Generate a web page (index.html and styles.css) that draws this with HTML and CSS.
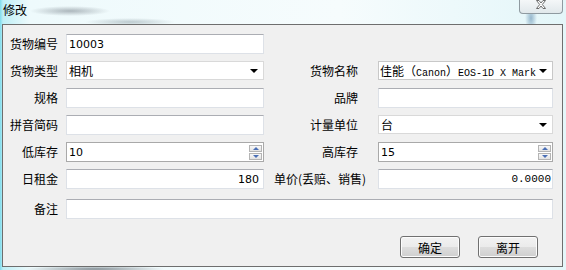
FILE: index.html
```html
<!DOCTYPE html>
<html>
	<head>
		<meta charset="utf-8">
		<title>修改</title>
		<link rel="stylesheet" href="styles.css">
	</head>
	<body>
		<div class="window">
			<div class="titlebar">
				<div class="title">修改</div>
				<div class="close">
					<svg width="12" height="10" viewBox="0 0 12 10">
						<path d="M1.5 0.5 L4 0.5 L6 3 L8 0.5 L10.5 0.5 L7.3 4.5 L10.5 8.5 L8 8.5 L6 6 L4 8.5 L1.5 8.5 L4.7 4.5 Z" fill="#fff" stroke="#6d6d6d" stroke-width="1"/>
					</svg>
				</div>
			</div>

			<div class="client">
				<div class="form">
					<div class="label">货物编号</div>
					<div class="field text">10003</div>
					<div></div>
					<div></div>

					<div class="label">货物类型</div>
					<div class="field combo"><span class="value">相机</span><span class="arrow"></span></div>
					<div class="label right">货物名称</div>
					<div class="field combo framed"><span class="value mono"><span class="cjk">佳能（</span>Canon<span class="cjk">）</span>EOS-1D X Mark</span><span class="arrow"></span></div>

					<div class="label">规格</div>
					<div class="field text"></div>
					<div class="label right">品牌</div>
					<div class="field text"></div>

					<div class="label">拼音简码</div>
					<div class="field text"></div>
					<div class="label right">计量单位</div>
					<div class="field combo"><span class="value">台</span><span class="arrow"></span></div>

					<div class="label">低库存</div>
					<div class="field spin"><span class="value">10</span><span class="spinner"><span class="up"></span><span class="down"></span></span></div>
					<div class="label right">高库存</div>
					<div class="field spin"><span class="value">15</span><span class="spinner"><span class="up"></span><span class="down"></span></span></div>

					<div class="label">日租金</div>
					<div class="field text num">180</div>
					<div class="label right wide">单价(丢赔、销售)</div>
					<div class="field text num mono">0.0000</div>

					<div class="label last">备注</div>
					<div class="field text last memo"></div>
				</div>

				<div class="buttons">
					<div class="button">确定</div>
					<div class="button">离开</div>
				</div>
			</div>
		</div>
	</body>
</html>
```

FILE: styles.css
```css
body {
	margin: 0;
	width: 566px;
	height: 270px;
	overflow: hidden;
	font-family: "Noto Sans CJK SC", sans-serif;
	font-size: 12px;
	color: #000;
	background:
		radial-gradient(ellipse 40px 5px at 70px 11px, rgba(90, 100, 110, 0.45), transparent),
		radial-gradient(ellipse 45px 4px at 130px 22px, rgba(90, 110, 120, 0.35), transparent),
		radial-gradient(ellipse 6px 14px at 531px 18px, rgba(70, 120, 160, 0.5), transparent),
		radial-gradient(ellipse 70px 3px at 95px 269px, rgba(60, 70, 80, 0.6), transparent),
		radial-gradient(ellipse 60px 3px at 430px 269px, rgba(255, 255, 255, 0.9), transparent),
		linear-gradient(to right, #7fdced 0, #bfeff6 3px, #eefafc 30px, #f6fcfd 60%, #e4f6f9 100%);
}

.window {display: flex; flex-direction: column; height: 270px;}

/* title bar */
.titlebar {display: flex; justify-content: space-between; height: 24px; flex: none;}
.title {padding: 2px 0 0 3px; font-size: 12px; line-height: 16px;}
.close {
	display: flex; align-items: flex-start; justify-content: center;
	width: 44px; height: 14px; margin-right: 3px;
	border: 1px solid #8f9aa0; border-top: 0; border-radius: 0 0 4px 4px;
	background: linear-gradient(#f4f7f8, #e1e8eb);
	box-sizing: border-box;
}

/* client area */
.client {
	height: 243px; margin: 0 3px 0 2px;
	border: 1px solid #6e6e6e;
	background: #f0f0f0;
	box-sizing: border-box;
	padding-top: 9px;
}

.form {
	display: grid;
	grid-template-columns: 63px 198px 114px 175px;
	grid-template-rows: repeat(6, 20px) 23px;
	row-gap: 7px;
}

.label {display: flex; align-items: center; justify-content: flex-end; padding-right: 8px; white-space: nowrap; line-height: 14px;}
.label.right {padding-right: 20px;}
.label.wide {padding-right: 12px; margin-left: -20px;}
.label.last {align-self: end; height: 20px;}

.field {
	display: flex; align-items: center;
	height: 20px; box-sizing: border-box;
	background: #fff;
	border: 1px solid #dde1e7; border-top-color: #abadb3;
	padding: 0 2px;
	font-family: "DejaVu Sans", "Noto Sans CJK SC", sans-serif;
	font-size: 11px;
	overflow: hidden; white-space: nowrap;
}
.field.last {align-self: end;}
.field.memo {grid-column: 2 / 5;}
.field.num {justify-content: flex-end; padding-right: 4px;}
.mono {font-family: "Liberation Mono", monospace; font-size: 11px;}
.field.num.mono {padding-right: 1px;}
.cjk {font-family: "Noto Sans CJK SC", sans-serif; font-size: 12px;}

.combo {border-color: #d9d9d9; height: 19px;}
.combo.framed {border-color: #c8c8c8; padding-left: 1px;}
.combo .value {flex: 1; overflow: hidden; font-family: "Noto Sans CJK SC", sans-serif; font-size: 12px;}
.combo .value.mono {font-family: "Liberation Mono", monospace; font-size: 10px;}
.arrow {
	flex: none; width: 0; height: 0; margin: 1px 3px 0 3px;
	border-left: 4px solid transparent; border-right: 4px solid transparent;
	border-top: 4px solid #000;
}

.spin {border-color: #a9a9a9; padding-right: 1px;}
.spin .value {flex: 1;}
.spinner {display: flex; flex-direction: column; gap: 1px; flex: none;}
.spinner span {
	display: flex; align-items: center; justify-content: center;
	width: 13px; height: 7px; box-sizing: border-box;
	border: 1px solid #b4b4b4;
	background: linear-gradient(#f8f8f8, #e3e3e3);
}
.spinner .up::before {content: ""; border-left: 3px solid transparent; border-right: 3px solid transparent; border-bottom: 3px solid #4a6fb5;}
.spinner .down::before {content: ""; border-left: 3px solid transparent; border-right: 3px solid transparent; border-top: 3px solid #4a6fb5;}

/* buttons */
.buttons {display: flex; justify-content: flex-end; gap: 18px; margin-top: 17px; padding-right: 24px;}
.button {
	display: flex; align-items: center; justify-content: center;
	width: 60px; height: 22px; box-sizing: border-box;
	border: 1px solid #707070; border-radius: 3px;
	background: linear-gradient(#f2f2f2 0, #ebebeb 50%, #dddddd 51%, #cfcfcf 100%);
	box-shadow: inset 0 0 0 1px #fcfcfc;
	font-size: 12px;
}
```
